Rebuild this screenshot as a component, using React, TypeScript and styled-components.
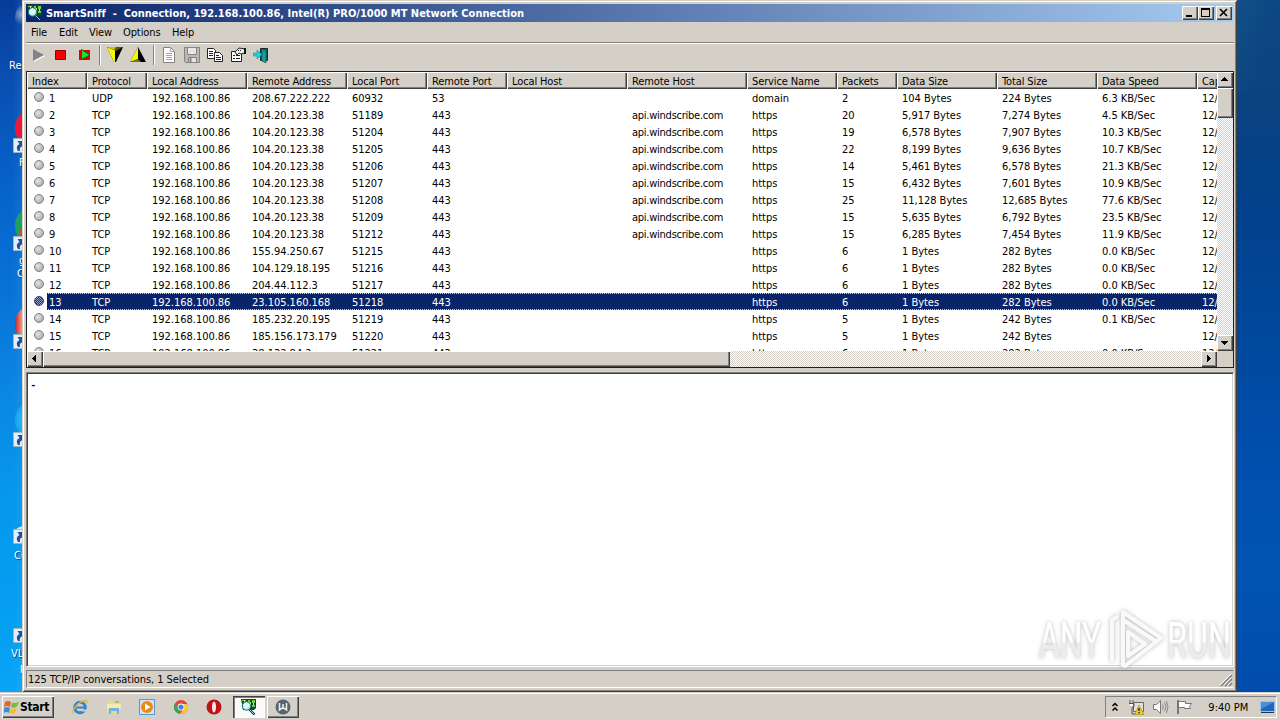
import React from "react";
import styled, { createGlobalStyle, css } from "styled-components";

const face = "#d4d0c8";
const uiFont = `"DejaVu Sans Condensed", "DejaVu Sans", sans-serif`;

const raised = css`
  background: ${face};
  box-shadow: inset 1px 1px #fff, inset -1px -1px #404040, inset -2px -2px #808080;
`;
const dither = css`
  background: repeating-conic-gradient(#fff 0 25%, ${face} 0 50%) 0 0 / 2px 2px;
`;

const GlobalStyle = createGlobalStyle`
  * { box-sizing: border-box; }
  body { margin: 0; overflow: hidden; }
  svg { display: block; flex: none; }
`;

const Screen = styled.div`
  width: 1280px;
  height: 720px;
  display: flex;
  flex-direction: column;
  overflow: hidden;
  font: 11px/13px ${uiFont};
  font-stretch: condensed;
  color: #000;
  white-space: pre;
`;
const Desktop = styled.div`
  height: 692px;
  display: grid;
  grid-template-columns: 22px 1215px 43px;
`;
const LeftWallpaper = styled.div`
  position: relative;
  overflow: hidden;
  background: linear-gradient(90deg, transparent 60%, rgba(80, 190, 255, 0.12)),
    linear-gradient(#073b98 0, #0a4db0 70px, #0665cb 200px, #0874d8 300px, #0a88e4 400px, #0698ec 500px, #049ef2 610px, #0aa4f6 692px);
`;
const RightWallpaper = styled.div`
  background: linear-gradient(100deg, rgba(40, 110, 150, 0.18), transparent 60%) 0 0 / 100% 90px no-repeat,
    linear-gradient(#0d4884 0, #0b4380 90px, #02408a 200px, #00489c 330px, #0050b0 480px, #0054b4 570px, #004cac 692px);
`;
const ShortcutIcon = styled.div<{ $top: number; $color: string; $h?: number }>`
  position: absolute;
  left: 15px;
  top: ${(p) => p.$top}px;
  width: 32px;
  height: ${(p) => p.$h ?? 36}px;
  border-radius: 50%;
  background: ${(p) => p.$color};
`;
const ShortcutArrow = styled.div<{ $top: number }>`
  position: absolute;
  left: 13px;
  top: ${(p) => p.$top}px;
`;
const ShortcutLabel = styled.div<{ $top: number; $left: number }>`
  position: absolute;
  left: ${(p) => p.$left}px;
  top: ${(p) => p.$top}px;
  color: #fff;
  text-shadow: 1px 1px 1px #003a80;
`;

const Window = styled.div`
  display: flex;
  flex-direction: column;
  height: 692px;
  padding: 4px;
  padding-right: 3px;
  background: ${face};
  box-shadow: inset 1px 1px ${face}, inset -1px -1px #404040, inset 2px 2px #fff, inset -2px -2px #808080;
`;
const TitleBar = styled.div`
  height: 18px;
  margin-right: 1px;
  display: flex;
  align-items: center;
  padding: 0 1px 0 1px;
  background: linear-gradient(90deg, #0a246a, #a6caf0);
`;
const Title = styled.div`
  flex: 1;
  margin-left: 3px;
  color: #fff;
  font-weight: bold;
  letter-spacing: -0.01px;
`;
const CaptionButton = styled.div<{ $gap?: boolean }>`
  ${raised}
  width: 16px;
  height: 14px;
  margin-left: ${(p) => (p.$gap ? 2 : 0)}px;
`;
const MenuBar = styled.div`
  height: 20px;
  display: flex;
  align-items: center;
  padding-left: 5px;
`;
const MenuItem = styled.div<{ $w: number }>`
  width: ${(p) => p.$w}px;
  letter-spacing: -0.1px;
`;
const Rule = styled.div`
  height: 2px;
  border-top: 1px solid #808080;
  border-bottom: 1px solid #fff;
`;
const Toolbar = styled.div`
  height: 27px;
  display: flex;
  align-items: center;
  padding: 0 0 5px 0;
`;
const Tool = styled.div`
  width: 23px;
  height: 16px;
  display: flex;
  justify-content: center;
`;
const ToolSeparator = styled.div`
  width: 2px;
  height: 20px;
  margin: 0 2px 0 4px;
  border-left: 1px solid #808080;
  border-right: 1px solid #fff;
`;

const ListFrame = styled.div`
  height: 297px;
  border: 1px solid #202020;
  display: grid;
  grid-template: 279px 16px / 1190px 16px;
  background: ${face};
`;
const ListView = styled.div`
  overflow: hidden;
  background: #fff;
`;
const gridColumns = css`
  display: grid;
  width: 1290px;
  grid-template-columns: 60px 60px 100px 100px 80px 80px 120px 120px 90px 60px 100px 100px 100px 120px;
`;
const HeaderRow = styled.div`
  ${gridColumns}
  height: 17px;
`;
const HeaderCell = styled.div`
  ${raised}
  padding: 3px 0 0 5px;
  letter-spacing: -0.12px;
`;
const Row = styled.div<{ $selected?: boolean }>`
  ${gridColumns}
  height: 17px;
  align-items: center;
  ${(p) =>
    p.$selected &&
    css`
      color: #fff;
      background:
        repeating-linear-gradient(90deg, #0a246a 0 1px, #e0d8b8 1px 2px) 20px 0 / 100% 1px no-repeat,
        repeating-linear-gradient(90deg, #0a246a 0 1px, #e0d8b8 1px 2px) 20px 16px / 100% 1px no-repeat,
        linear-gradient(90deg, #fff 20px, #0a246a 20px);
    `}
`;
const Cell = styled.div<{ $tight?: boolean }>`
  padding: 1px 0 0 5px;
  letter-spacing: ${(p) => (p.$tight ? "-0.25px" : "-0.02px")};
`;
const IndexCell = styled.div`
  display: flex;
  align-items: center;
  gap: 5px;
  padding: 1px 0 0 7px;
`;
const Dot = styled.i<{ $selected?: boolean }>`
  width: 10px;
  height: 10px;
  margin-top: -2px;
  border: 1px solid ${(p) => (p.$selected ? "#2c3e78" : "#808080")};
  border-radius: 50%;
  background: ${(p) =>
    p.$selected
      ? "repeating-conic-gradient(#16307a 0 25%, #9aa6c8 0 50%) 0 0 / 2px 2px"
      : "radial-gradient(circle at 35% 35%, #e4e4e4, #b0b0b0 75%)"};
`;
const VScroll = styled.div`
  ${dither}
  display: flex;
  flex-direction: column;
`;
const HScroll = styled.div`
  ${dither}
  display: flex;
`;
const ScrollPart = styled.div<{ $w?: number; $h?: number }>`
  ${raised}
  display: flex;
  align-items: center;
  justify-content: center;
  padding: 0 1px 1px 0;
  width: ${(p) => p.$w ?? 16}px;
  height: ${(p) => p.$h ?? 16}px;
`;
const Spring = styled.div`
  flex: 1;
`;

const DetailPane = styled.div`
  position: relative;
  height: 295px;
  margin-top: 4px;
  padding: 6px 3px;
  background: #fff;
  border: 1px solid #808080;
  border-right-color: #fff;
  border-bottom-color: #fff;
  box-shadow: inset 1px 1px #404040, inset -1px -1px ${face};
  color: #0000a0;
  font: bold 11px/13px "Liberation Mono", monospace;
`;
const Watermark = styled.svg`
  position: absolute;
  left: 1010px;
  top: 233px;
  overflow: visible;
`;
const StatusBar = styled.div`
  height: 18px;
  margin-top: 3px;
  display: flex;
  justify-content: space-between;
  align-items: flex-end;
  border: 1px solid #808080;
  border-right-color: ${face};
  border-bottom-color: #fff;
  padding-left: 1px;
`;
const StatusText = styled.div`
  align-self: center;
  letter-spacing: -0.07px;
`;

const Taskbar = styled.div`
  height: 28px;
  display: flex;
  align-items: center;
  padding: 2px 3px 0 2px;
  background: ${face};
  box-shadow: inset 0 1px ${face}, inset 0 2px #fff;
`;
const StartButton = styled.div`
  ${raised}
  width: 52px;
  height: 22px;
  display: flex;
  align-items: center;
  padding-left: 2px;
  font-weight: bold;
  font-size: 12px;
  letter-spacing: -0.3px;
`;
const QuickLaunch = styled.div`
  display: flex;
  width: 179px;
  padding-left: 18px;
  gap: 17.6px;
`;
const TaskButton = styled.div<{ $active?: boolean }>`
  ${raised}
  width: 32px;
  height: 22px;
  margin-right: 2px;
  display: flex;
  align-items: center;
  justify-content: center;
  ${(p) =>
    p.$active &&
    css`
      background: #fbfaf8;
      box-shadow: inset 1px 1px #404040, inset 2px 2px #808080, inset -1px -1px #fff;
    `}
`;
const Tray = styled.div`
  width: 172px;
  height: 22px;
  margin-left: auto;
  display: flex;
  align-items: center;
  border: 1px solid #808080;
  border-right-color: #fff;
  border-bottom-color: #fff;
  padding-left: 5px;
`;
const TrayIcon = styled.div<{ $w: number }>`
  width: ${(p) => p.$w}px;
`;
const Clock = styled.div`
  width: 52px;
`;

function SniffIcon() {
  return (
    <svg width="16" height="16" viewBox="0 0 16 16">
      <path d="M0 0h15v9l-2 2H2z" fill="#124a20" />
      <path d="M1 1h4v1H1zM7 1h2v3H7zM11 1h3v3h-3zM11 6h3v2h-3z" fill="#62d052" />
      <path d="M9 3h1v5H9zM12 4h1v2h-1zM3 1h1v2H3z" fill="#e8e860" />
      <circle cx="5.500" cy="7" r="4.200" fill="#b8f2f6" stroke="#187078" />
      <path d="M3 6.500l3-3M4 9l4-4" stroke="#fff" strokeWidth="1.200" />
      <path d="M8.500 10.500l5 5" stroke="#083850" strokeWidth="2.400" />
      <path d="M8.500 10.500l4.500 4.500" stroke="#90d8e8" strokeWidth=".9" />
    </svg>
  );
}

function Arrow({ dir }: { dir: "up" | "down" | "left" | "right" }) {
  const d = {
    up: "M4 2h1v1h1v1h1v1h1v1H1V5h1V4h1V3h1z",
    down: "M1 3h7v1H7v1H6v1H5v1H4V6H3V5H2V4H1z",
    left: "M2 4h1V3h1V2h1V1h1v7H5V7H4V6H3V5H2z",
    right: "M3 1h1v1h1v1h1v1h1v1H6v1H5v1H4v1H3z",
  }[dir];
  return (
    <svg width="9" height="9" shapeRendering="crispEdges">
      <path d={d} />
    </svg>
  );
}

const headers = ["Index", "Protocol", "Local Address", "Remote Address", "Local Port", "Remote Port", "Local Host", "Remote Host", "Service Name", "Packets", "Data Size", "Total Size", "Data Speed", "Capture Time"];

type Conversation = [string, string, string, string, string, string, string, string, string];
const ws = "api.windscribe.com";
const conversations: Conversation[] = [
  ["UDP", "208.67.222.222", "60932", "53", "", "2", "104 Bytes", "224 Bytes", "6.3 KB/Sec"],
  ["TCP", "104.20.123.38", "51189", "443", ws, "20", "5,917 Bytes", "7,274 Bytes", "4.5 KB/Sec"],
  ["TCP", "104.20.123.38", "51204", "443", ws, "19", "6,578 Bytes", "7,907 Bytes", "10.3 KB/Sec"],
  ["TCP", "104.20.123.38", "51205", "443", ws, "22", "8,199 Bytes", "9,636 Bytes", "10.7 KB/Sec"],
  ["TCP", "104.20.123.38", "51206", "443", ws, "14", "5,461 Bytes", "6,578 Bytes", "21.3 KB/Sec"],
  ["TCP", "104.20.123.38", "51207", "443", ws, "15", "6,432 Bytes", "7,601 Bytes", "10.9 KB/Sec"],
  ["TCP", "104.20.123.38", "51208", "443", ws, "25", "11,128 Bytes", "12,685 Bytes", "77.6 KB/Sec"],
  ["TCP", "104.20.123.38", "51209", "443", ws, "15", "5,635 Bytes", "6,792 Bytes", "23.5 KB/Sec"],
  ["TCP", "104.20.123.38", "51212", "443", ws, "15", "6,285 Bytes", "7,454 Bytes", "11.9 KB/Sec"],
  ["TCP", "155.94.250.67", "51215", "443", "", "6", "1 Bytes", "282 Bytes", "0.0 KB/Sec"],
  ["TCP", "104.129.18.195", "51216", "443", "", "6", "1 Bytes", "282 Bytes", "0.0 KB/Sec"],
  ["TCP", "204.44.112.3", "51217", "443", "", "6", "1 Bytes", "282 Bytes", "0.0 KB/Sec"],
  ["TCP", "23.105.160.168", "51218", "443", "", "6", "1 Bytes", "282 Bytes", "0.0 KB/Sec"],
  ["TCP", "185.232.20.195", "51219", "443", "", "5", "1 Bytes", "242 Bytes", "0.1 KB/Sec"],
  ["TCP", "185.156.173.179", "51220", "443", "", "5", "1 Bytes", "242 Bytes", ""],
  ["TCP", "38.132.84.2", "51221", "443", "", "6", "1 Bytes", "282 Bytes", "0.0 KB/Sec"],
];

function ConversationRow({ index, data }: { index: number; data: Conversation }) {
  const [protocol, remote, localPort, remotePort, host, packets, size, total, speed] = data;
  const selected = index === 13;
  const cells = [protocol, "192.168.100.86", remote, localPort, remotePort, "", host, index === 1 ? "domain" : "https", packets, size, total, speed, "12/6/2021"];
  return (
    <Row $selected={selected}>
      <IndexCell>
        <Dot $selected={selected} />
        {index}
      </IndexCell>
      {cells.map((c, i) => (
        <Cell key={i} $tight={i === 6}>{c}</Cell>
      ))}
    </Row>
  );
}

function ToolbarIcons() {
  return (
    <Toolbar>
      <Tool>
        <svg width="16" height="16"><path d="M4 3v12L15 9z" fill="#fff" /><path d="M3 2v12l11-6z" fill="#848284" /></svg>
      </Tool>
      <Tool>
        <svg width="16" height="16"><path d="M2.500 3.500h10v9h-10z" fill="#f80000" stroke="#900" /></svg>
      </Tool>
      <Tool>
        <svg width="16" height="16"><path d="M3 3h11v10H3z" fill="#e00000" /><path d="M5.500 2.500v10L14 8z" fill="#10e820" stroke="#063" /></svg>
      </Tool>
      <ToolSeparator />
      <Tool>
        <svg width="16" height="16"><path d="M0 0h16L9 15H7z" fill="#000" /><path d="M0 0l8 3v12H7z" fill="#f8f800" /><path d="M0 0h16l-7 4z" fill="#5c5a08" /><path d="M0 0h9L7 3z" fill="#c8c608" /></svg>
      </Tool>
      <Tool>
        <svg width="16" height="16"><path d="M8 0l8 15H0z" fill="#000" /><path d="M8 0v12L0 15z" fill="#f8f800" /><path d="M0 15l8-3 3 3z" fill="#78760a" /></svg>
      </Tool>
      <ToolSeparator />
      <Tool>
        <svg width="16" height="16"><path d="M2.500.5h7l4 4v11h-11z" fill="#fff" stroke="#848284" /><path d="M9.500.5v4h4M5 6.500h6M5 8.500h6M5 10.500h6M5 12.500h6" fill="none" stroke="#a8a6a2" /></svg>
      </Tool>
      <Tool>
        <svg width="16" height="16"><path d="M.5.5h15v15h-14l-1-1z" fill="#bcb9b3" stroke="#848284" /><path d="M3.500.5h9v7h-9zM4.500 10.500h8v5h-8z" fill="#e8e6e0" stroke="#848284" /><path d="M6.500 11v4" stroke="#848284" strokeWidth="2" /></svg>
      </Tool>
      <Tool>
        <svg width="16" height="16"><path d="M.5 1.500h6l2 2v8h-8z" fill="#fff" stroke="#222" /><path d="M2 4.500h4M2 6.500h4M2 8.500h4" stroke="#222" /><path d="M7.500 5.500h5l3 3v6h-8z" fill="#fff" stroke="#222" /><path d="M9 8.500h3M9 10.500h5M9 12.500h5" stroke="#222" /></svg>
      </Tool>
      <Tool>
        <svg width="16" height="16"><path d="M1.500 4.500h10v10h-10z" fill="#fff" stroke="#222" /><path d="M3 8.500h2M6 8.500h4M3 11.500h2M6 11.500h4" stroke="#222" /><path d="M5 5l4-4 6 1v4l-4 1-2-1-2 2z" fill="#eee" stroke="#222" /><path d="M14 1h2v6h-2z" fill="#111" /><path d="M8 3.500h4" stroke="#222" strokeDasharray="1 1" /></svg>
      </Tool>
      <Tool>
        <svg width="16" height="16"><path d="M7.500 1.500h7v12h-7z" fill="#087070" stroke="#222" /><path d="M9 2l4 2v12l-4-2z" fill="#18a0a0" stroke="#155" strokeWidth=".7" /><path d="M0 6h4V3l5 4.500L4 12V9H0z" fill="#10d8d8" stroke="#088" strokeWidth=".5" /></svg>
      </Tool>
    </Toolbar>
  );
}

function Flag() {
  return (
    <svg width="16" height="16" viewBox="0 0 16 16">
      <path d="M1 3q3-2 6 0l-1 5Q3 6 0 8z" fill="#e8602c" />
      <path d="M8 3.500q3 1.500 7-1l-2 5q-3 2-6 .7z" fill="#7cba3c" />
      <path d="M0 9q3-2 6 0l-1 5q-3-2-5 0z" fill="#3c8cd8" />
      <path d="M6.700 9.300q3 1.500 6-.5l-1 5q-3 2-6 0z" fill="#f4c030" />
    </svg>
  );
}

export default function App() {
  return (
    <Screen>
      <GlobalStyle />
      <Desktop>
        <LeftWallpaper>
          <ShortcutIcon $top={0} $color="radial-gradient(circle at 20% 40%, rgba(190,210,225,.7), transparent 30%)" />
          <ShortcutIcon $top={110} $color="#f01838" />
          <ShortcutIcon $top={208} $color="linear-gradient(115deg, #20a060 32%, #d84830 33%)" />
          <ShortcutIcon $top={306} $color="linear-gradient(90deg, #d02020, #f09080 20%, #c01010 30%)" />
          <ShortcutIcon $top={402} $color="radial-gradient(circle, #30c8ff, rgba(20,170,240,.2))" />
          <ShortcutIcon $top={525} $h={14} $color="#dce8f0" />
          {[138, 236, 334, 432, 529, 628].map((top) => (
            <ShortcutArrow key={top} $top={top}>
              <svg width="15" height="15"><path d="M.5.5h14v14H.5z" fill="#e4eef6" stroke="#9ab4c8" /><path d="M5 13Q2 8 6.500 6L4.500 3H12v7L9.500 8Q6 9 7 13z" fill="#1c4f9c" /></svg>
            </ShortcutArrow>
          ))}
          <ShortcutLabel $top={59} $left={9}>Rec</ShortcutLabel>
          <ShortcutLabel $top={156} $left={19}>F</ShortcutLabel>
          <ShortcutLabel $top={254} $left={19}>g</ShortcutLabel>
          <ShortcutLabel $top={267} $left={17}>C</ShortcutLabel>
          <ShortcutLabel $top={549} $left={14}>CC</ShortcutLabel>
          <ShortcutLabel $top={647} $left={11}>VLC</ShortcutLabel>
          <ShortcutLabel $top={661} $left={20}>p</ShortcutLabel>
        </LeftWallpaper>

        <Window>
          <TitleBar>
            <SniffIcon />
            <Title>SmartSniff  -  Connection, 192.168.100.86, Intel(R) PRO/1000 MT Network Connection</Title>
            <CaptionButton><svg width="16" height="14"><path d="M4 9h6v2H4z" /></svg></CaptionButton>
            <CaptionButton><svg width="16" height="14" shapeRendering="crispEdges"><path d="M3 2h9v9H3zM4 4v6h7V4z" fillRule="evenodd" /></svg></CaptionButton>
            <CaptionButton $gap><svg width="16" height="14"><path d="M4 3l7 7M11 3l-7 7" stroke="#000" strokeWidth="1.600" /></svg></CaptionButton>
          </TitleBar>
          <MenuBar>
            <MenuItem $w={28}>File</MenuItem>
            <MenuItem $w={30}>Edit</MenuItem>
            <MenuItem $w={34}>View</MenuItem>
            <MenuItem $w={49}>Options</MenuItem>
            <MenuItem $w={40}>Help</MenuItem>
          </MenuBar>
          <Rule />
          <ToolbarIcons />
          <ListFrame>
            <ListView>
              <HeaderRow>
                {headers.map((h) => (
                  <HeaderCell key={h}>{h}</HeaderCell>
                ))}
              </HeaderRow>
              {conversations.map((c, i) => (
                <ConversationRow key={i} index={i + 1} data={c} />
              ))}
            </ListView>
            <VScroll>
              <ScrollPart><Arrow dir="up" /></ScrollPart>
              <ScrollPart $h={30} />
              <Spring />
              <ScrollPart><Arrow dir="down" /></ScrollPart>
            </VScroll>
            <HScroll>
              <ScrollPart><Arrow dir="left" /></ScrollPart>
              <ScrollPart $w={687} />
              <Spring />
              <ScrollPart><Arrow dir="right" /></ScrollPart>
            </HScroll>
          </ListFrame>
          <DetailPane>
            -
            <Watermark width="200" height="70" viewBox="0 0 200 70">
              <defs>
                <linearGradient id="wm" x1="0" y1="0" x2="0" y2="1">
                  <stop offset=".5" stopColor="#fff" />
                  <stop offset=".55" stopColor="#ececec" />
                </linearGradient>
                <filter id="glow" x="-10%" y="-20%" width="120%" height="140%">
                  <feDropShadow dx="0" dy="0" stdDeviation="2" floodColor="#888" floodOpacity=".6" />
                </filter>
              </defs>
              <g filter="url(#glow)" fill="url(#wm)" fontFamily="Roboto, sans-serif" fontSize="50" fontWeight="400">
                <text x="2" y="52" textLength="62" lengthAdjust="spacingAndGlyphs">ANY</text>
                <text x="130" y="52" textLength="64" lengthAdjust="spacingAndGlyphs">RUN</text>
                <path d="M75 54V14l5-3M86 6v53M86 6l38 26-36 28M86 14l34 22M91 26v24l17-12z" fill="none" stroke="#f9f9f9" strokeWidth="4" strokeLinejoin="round" strokeLinecap="round" />
              </g>
            </Watermark>
          </DetailPane>
          <StatusBar>
            <StatusText>125 TCP/IP conversations, 1 Selected</StatusText>
            <svg width="13" height="13"><path d="M1 12L12 1M5 12l7-7M9 12l3-3" stroke="#808080" strokeWidth="1.500" /><path d="M0 11L11 0M4 11l7-7M8 11l3-3" stroke="#fff" /></svg>
          </StatusBar>
        </Window>
        <RightWallpaper />
      </Desktop>

      <Taskbar>
        <StartButton><Flag />Start</StartButton>
        <QuickLaunch>
          <svg width="16" height="16"><circle cx="8" cy="8.500" r="5.300" fill="none" stroke="#2c86d8" strokeWidth="3" /><path d="M4 8.500h9" stroke="#2c86d8" strokeWidth="2" /><path d="M10 10.500h6v2h-6z" fill={face} /><path d="M1.500 14.500C-1 12 6 2 14 1.500q2 .5.5 3" fill="none" stroke="#e8b830" strokeWidth="1.300" /></svg>
          <svg width="16" height="16"><path d="M1 2h6l1 1h6v11H1z" fill="#f0d880" /><path d="M1 5h14v5H1z" fill="#f8eab0" /><path d="M3 9h10v6h-2v-3H5v3H3z" fill="#6cb4e0" /><path d="M9 3h4" stroke="#50a858" /></svg>
          <svg width="16" height="16"><path d="M.5.5h15v15H.5z" fill="#cfe4f6" stroke="#5898d0" /><circle cx="8" cy="8" r="6" fill="#f08818" /><path d="M6 4.500v7L11.500 8z" fill="#fff" /></svg>
          <svg width="16" height="16"><circle cx="8" cy="8" r="7" fill="#e04434" /><path d="M2 4.300L7 12l-1 2.800A7 7 0 0 1 2 4.300z" fill="#30a852" /><path d="M8 5h6.400A7 7 0 0 1 7 15l3.500-5z" fill="#f8ca30" /><circle cx="8" cy="8" r="3.400" fill="#fff" /><circle cx="8" cy="8" r="2.600" fill="#3f80e8" /></svg>
          <svg width="16" height="16"><circle cx="8" cy="8" r="7.500" fill="#c01018" /><ellipse cx="8" cy="8" rx="2" ry="5.500" fill="#f4e8e4" /></svg>
        </QuickLaunch>
        <TaskButton $active><SniffIcon /></TaskButton>
        <TaskButton>
          <svg width="16" height="16"><circle cx="8" cy="8" r="7.500" fill="#586470" /><path d="M4.500 4v7L8 8.500l3.500 2.500V4M8 5v4" fill="none" stroke="#e8ecf0" strokeWidth="1.600" /></svg>
        </TaskButton>
        <Tray>
          <TrayIcon $w={17}><svg width="9" height="12"><path d="M1.500 5L4 2.500 6.500 5M1.500 9.500L4 7l2.500 2.500" fill="none" stroke="#000" strokeWidth="1.500" /></svg></TrayIcon>
          <TrayIcon $w={24}><svg width="17" height="16"><path d="M5.500 3.500h10v9h-10z" fill="#e0e0dc" stroke="#666" /><path d="M2 1v4M5 1v4M1 4.500h5v3l-2 1V15h4" fill="none" stroke="#555" /><path d="M2 5h3v2H2z" fill="#fff" /><path d="M11 6l5 9.500H6.500z" fill="#f0cc20" stroke="#a08010" strokeWidth=".6" /><path d="M11 9v3M11 13v1.200" stroke="#222" strokeWidth="1.400" /></svg></TrayIcon>
          <TrayIcon $w={24}><svg width="17" height="16"><path d="M1.500 5.500h3l4-4v13l-4-4h-3z" fill="#fff" stroke="#777" /><path d="M10.500 5.500q1.500 2.500 0 5M12.500 3.500q3 4.500 0 9M14.500 2q3 6 0 12" fill="none" stroke="#888" /></svg></TrayIcon>
          <TrayIcon $w={33}><svg width="18" height="16"><path d="M2 1v14" stroke="#777" strokeWidth="2" /><path d="M2.500 2.500h7v2h6l-2 3 1 2h-6v-1h-6z" fill="#fff" stroke="#777" /></svg></TrayIcon>
          <Clock>9:40 PM</Clock>
          <svg width="16" height="14"><path d="M.5 1.500h14v10H.5z" fill="#2468b8" stroke="#9cc4e8" /><path d="M1 2h13l-13 7z" fill="#4890d8" /><path d="M1 12.500h13" stroke="#183860" /></svg>
        </Tray>
      </Taskbar>
    </Screen>
  );
}
